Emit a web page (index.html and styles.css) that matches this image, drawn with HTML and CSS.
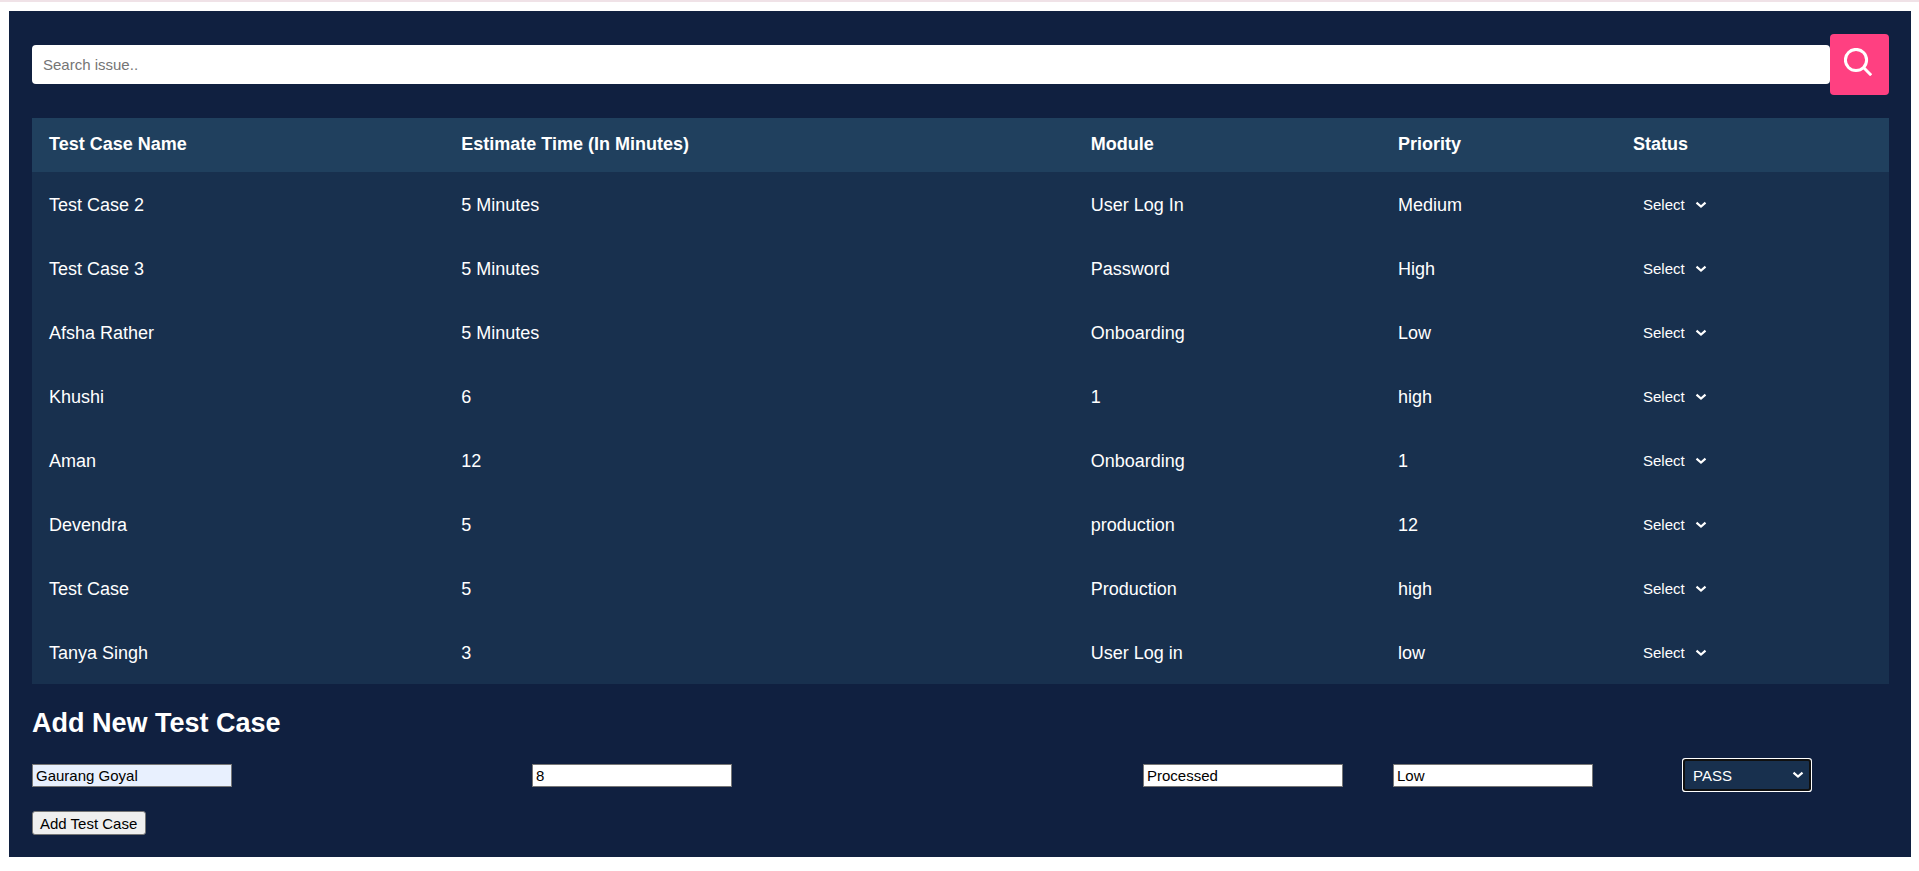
FILE: index.html
```html
<!DOCTYPE html>
<html lang="en">
<head>
<meta charset="utf-8">
<title>Test Cases</title>
<link rel="stylesheet" href="styles.css">
</head>
<body>
<main class="panel">
  <form class="search" role="search">
    <input class="search-input" type="text" placeholder="Search issue.." aria-label="Search issue">
    <button class="search-button" type="button" aria-label="Search">
      <svg class="search-icon" viewBox="0 0 28 28" aria-hidden="true"><circle cx="12" cy="12" r="10.6"/><path d="M19.5 19.5 27.2 27.2"/></svg>
    </button>
  </form>

  <table class="cases">
    <colgroup>
      <col class="col-name"><col class="col-time"><col class="col-module"><col class="col-priority"><col class="col-status">
    </colgroup>
    <thead>
      <tr><th>Test Case Name</th><th>Estimate Time (In Minutes)</th><th>Module</th><th>Priority</th><th>Status</th></tr>
    </thead>
    <tbody>
      <tr><td>Test Case 2</td><td>5 Minutes</td><td>User Log In</td><td>Medium</td><td><select class="status" aria-label="Status"><option>Select</option><option>PASS</option><option>FAIL</option></select></td></tr>
      <tr><td>Test Case 3</td><td>5 Minutes</td><td>Password</td><td>High</td><td><select class="status" aria-label="Status"><option>Select</option><option>PASS</option><option>FAIL</option></select></td></tr>
      <tr><td>Afsha Rather</td><td>5 Minutes</td><td>Onboarding</td><td>Low</td><td><select class="status" aria-label="Status"><option>Select</option><option>PASS</option><option>FAIL</option></select></td></tr>
      <tr><td>Khushi</td><td>6</td><td>1</td><td>high</td><td><select class="status" aria-label="Status"><option>Select</option><option>PASS</option><option>FAIL</option></select></td></tr>
      <tr><td>Aman</td><td>12</td><td>Onboarding</td><td>1</td><td><select class="status" aria-label="Status"><option>Select</option><option>PASS</option><option>FAIL</option></select></td></tr>
      <tr><td>Devendra</td><td>5</td><td>production</td><td>12</td><td><select class="status" aria-label="Status"><option>Select</option><option>PASS</option><option>FAIL</option></select></td></tr>
      <tr><td>Test Case</td><td>5</td><td>Production</td><td>high</td><td><select class="status" aria-label="Status"><option>Select</option><option>PASS</option><option>FAIL</option></select></td></tr>
      <tr><td>Tanya Singh</td><td>3</td><td>User Log in</td><td>low</td><td><select class="status" aria-label="Status"><option>Select</option><option>PASS</option><option>FAIL</option></select></td></tr>
    </tbody>
  </table>

  <h2 class="form-title">Add New Test Case</h2>
  <form class="new-case">
    <div class="fields">
      <input class="field field-filled" type="text" value="Gaurang Goyal" aria-label="Test case name">
      <input class="field" type="text" value="8" aria-label="Estimate time">
      <input class="field" type="text" value="Processed" aria-label="Module">
      <input class="field" type="text" value="Low" aria-label="Priority">
      <select class="status status-active" aria-label="Status"><option>PASS</option><option>FAIL</option></select>
    </div>
    <button class="add-button" type="button">Add Test Case</button>
  </form>
</main>
</body>
</html>
```

FILE: styles.css
```css
* {
  box-sizing: border-box;
}

body {
  margin: 0;
  padding: 9px 8px 14px 9px;
  border-top: 2px solid #f0e2e7;
  background: #fff;
  font-family: Arial, "Liberation Sans", sans-serif;
}

input,
select,
button {
  margin: 0;
  font-family: inherit;
  font-size: 15px;
}

.panel {
  padding: 23px 22px 22px 23px;
  background: #102040;
  color: #fff;
}

.search {
  display: flex;
  align-items: center;
  margin-bottom: 23px;
}

.search-input {
  flex: 1;
  min-width: 0;
  height: 39px;
  padding: 0 11px;
  border: 0;
  border-radius: 4px;
  background: #fff;
}

.search-input::placeholder {
  color: #757575;
}

.search-button {
  width: 59px;
  height: 61px;
  padding: 0 3px 5px 0;
  border: 0;
  border-radius: 4px;
  background: #ff4081;
}

.search-icon {
  display: block;
  width: 28px;
  height: 28px;
  margin: 0 auto;
  fill: none;
  stroke: #fff;
  stroke-width: 3;
}

.cases {
  width: 100%;
  table-layout: fixed;
  border-collapse: collapse;
  background: #18304e;
  font-size: 18px;
  line-height: 20px;
  text-align: left;
}

.col-name { width: 22.2%; }
.col-time { width: 33.9%; }
.col-module { width: 16.55%; }
.col-priority { width: 12.65%; }
.col-status { width: 14.7%; }

.cases th {
  height: 54px;
  padding: 0 17px 2px;
  background: #20405e;
}

.cases td {
  height: 64px;
  padding: 1px 17px 0;
}

.status {
  display: block;
  height: 28px;
  padding: 0 27px 0 10px;
  border: 0;
  appearance: none;
  background: #18304e url("data:image/svg+xml,%3Csvg xmlns='http://www.w3.org/2000/svg' width='12' height='8'%3E%3Cpath d='M1.5 1.7 6 5.5 10.5 1.7' fill='none' stroke='white' stroke-width='2.2'/%3E%3C/svg%3E") no-repeat right 5px center;
  color: #fff;
}

.form-title {
  margin: 23px 0 22px;
  font-size: 27px;
  line-height: 32px;
}

.fields {
  display: grid;
  grid-template-columns: 500fr 611fr 250fr 292fr 204fr;
  align-items: center;
  margin-bottom: 22px;
}

.field {
  width: 200px;
  height: 23px;
  padding: 0 3px;
  border: 1px solid #767676;
  background: #fff;
  color: #000;
}

.field-filled {
  background: #e8f0fe;
}

.status-active {
  width: 124px;
  padding-left: 8px;
  border-radius: 1px;
  box-shadow: 0 0 0 2px #101010, 0 0 0 3px #fff;
}

.add-button {
  display: block;
  height: 24px;
  padding: 0 8px 0 7px;
  border: 1px solid #767676;
  border-radius: 3px;
  background: #efefef;
  color: #000;
}
```
